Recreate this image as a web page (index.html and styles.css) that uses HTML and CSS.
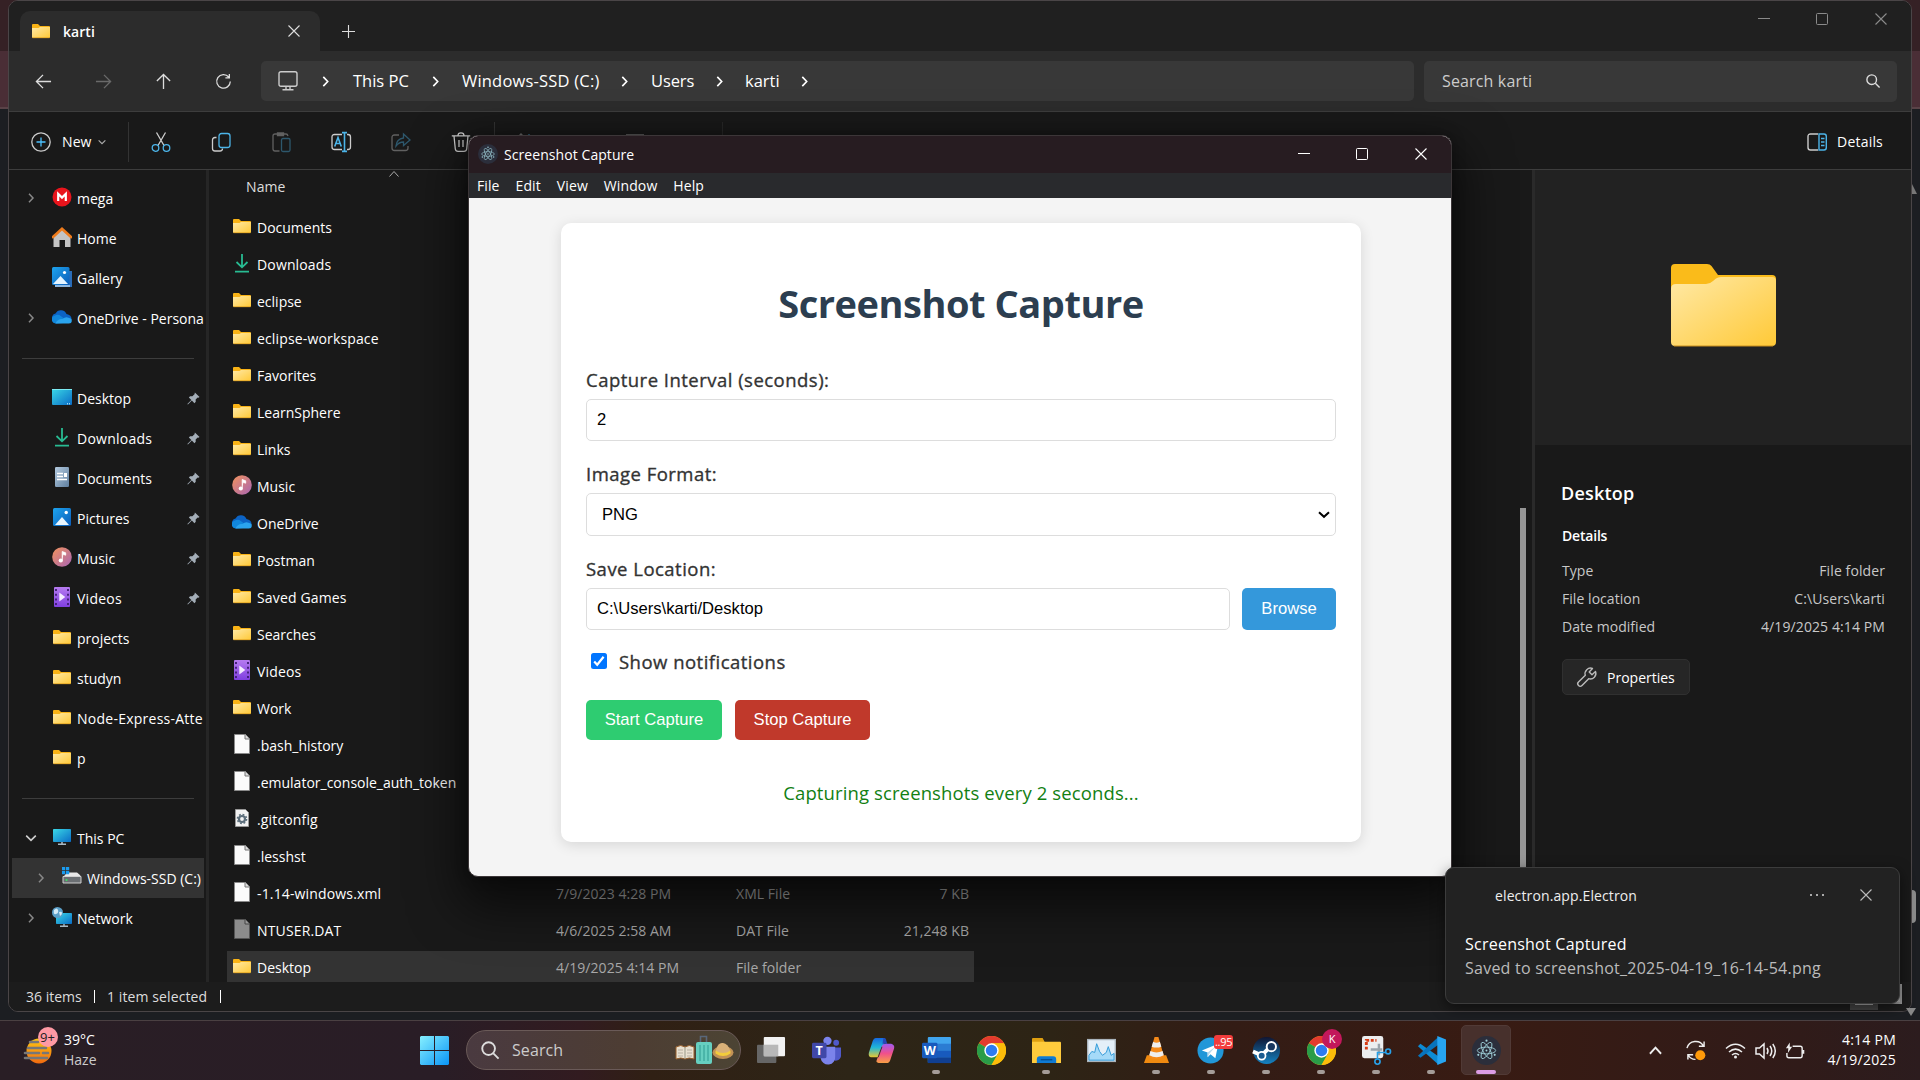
FILE: index.html
```html
<!DOCTYPE html>
<html lang="en">
<head>
<meta charset="utf-8">
<title>Desktop</title>
<link rel="stylesheet" href="styles.css">
</head>
<body>
<svg class="defs" width="0" height="0">
  <defs>
    <linearGradient id="gFolder" x1="0" y1="0" x2="1" y2="1"><stop offset="0" stop-color="#ffe9a6"/><stop offset="1" stop-color="#ffc937"/></linearGradient>
    <linearGradient id="gBlue" x1="0" y1="0" x2="1" y2="1"><stop offset="0" stop-color="#1da4ee"/><stop offset="1" stop-color="#0b5cb8"/></linearGradient>
    <linearGradient id="gCyan" x1="0" y1="0" x2="1" y2="1"><stop offset="0" stop-color="#3ad8e6"/><stop offset="1" stop-color="#0a6cc6"/></linearGradient>
    <linearGradient id="gMusic" x1="0" y1="0" x2="1" y2="1"><stop offset="0" stop-color="#f2935c"/><stop offset="1" stop-color="#a865b4"/></linearGradient>
    <linearGradient id="gDoc" x1="0" y1="0" x2="1" y2="1"><stop offset="0" stop-color="#b4cbe0"/><stop offset="1" stop-color="#5f7f9f"/></linearGradient>
    <linearGradient id="gVideo" x1="0" y1="0" x2="0" y2="1"><stop offset="0" stop-color="#b67bf0"/><stop offset="1" stop-color="#7f3fe0"/></linearGradient>
    <linearGradient id="gWin" x1="0" y1="0" x2="1" y2="1"><stop offset="0" stop-color="#86f0ff"/><stop offset="1" stop-color="#0a94f6"/></linearGradient>
    <linearGradient id="gCopA" x1="0" y1="0" x2="0" y2="1"><stop offset="0" stop-color="#1668e0"/><stop offset=".5" stop-color="#21b8d8"/><stop offset="1" stop-color="#e8c832"/></linearGradient>
    <linearGradient id="gCopB" x1="0" y1="0" x2="0" y2="1"><stop offset="0" stop-color="#a05af0"/><stop offset=".5" stop-color="#f0508c"/><stop offset="1" stop-color="#f8a044"/></linearGradient>
    <linearGradient id="gSteam" x1="0" y1="0" x2="0" y2="1"><stop offset="0" stop-color="#101532"/><stop offset="1" stop-color="#1583c2"/></linearGradient>
    <linearGradient id="gHaze" x1="0" y1="0" x2="0" y2="1"><stop offset="0" stop-color="#ffc812"/><stop offset="1" stop-color="#f06a10"/></linearGradient>
  </defs>
  <symbol id="folder" viewBox="0 0 20 20"><path d="M1 4q0-1 1-1h5l2 2h9q1 0 1 1v4H1z" fill="#f9b316"/><path d="M1 7h6.5L9 6h10v10q0 1-1 1H2q-1 0-1-1z" fill="url(#gFolder)"/><path d="M1.5 16.7h17" stroke="#e0a020" stroke-width=".8"/></symbol>
  <symbol id="down" viewBox="0 0 20 20"><path d="M10 1v13M4.5 9 10 14.3 15.500 9M3 18.700h14" fill="none" stroke="#28bb92" stroke-width="1.800"/></symbol>
  <symbol id="home" viewBox="0 0 20 20"><path d="M1.500 9.500 10 2l8.500 7.500V20H13v-7H7.500v7h-6z" fill="#c4c4c4"/><path d="M1 10 10 1.800 19 10" fill="none" stroke="#ee7b1c" stroke-width="2.600" stroke-linecap="round"/></symbol>
  <symbol id="mega" viewBox="0 0 20 20"><circle cx="10" cy="10" r="9.500" fill="#e9141c"/><path d="M6.200 14V6.800L10 10.600l3.800-3.800V14" fill="none" stroke="#fff" stroke-width="2.200"/></symbol>
  <symbol id="gallery" viewBox="0 0 20 20"><path d="M4 4h16v16H4z" fill="#2a6cb8"/><path d="M3 18h15v2H3z" fill="#8fb8e0"/><rect width="17.500" height="18" rx="1.500" fill="url(#gBlue)"/><path d="m1 17 7.500-8 7.500 8z" fill="#e4f4ff"/><circle cx="12.500" cy="5.500" r="1.600" fill="#fff"/></symbol>
  <symbol id="pics" viewBox="0 0 20 20"><rect x="1" y="1" width="18" height="18" rx="1.500" fill="url(#gBlue)"/><path d="m3 18 7-8 7 8z" fill="#e9f6ff"/><circle cx="14.200" cy="5.500" r="1.700" fill="#fff"/></symbol>
  <symbol id="cloud" viewBox="0 0 20 20"><path d="M1 13a4 4 0 0 1 2.500-6.500A6 6 0 0 1 14.500 7Q20 8 19.500 13z" fill="#0c63c4"/><path d="M4 16.500a4 4 0 0 1-1.500-7.800Q6 6.500 9 9.200l9 6.300z" fill="#1187dc"/><path d="M3.500 16.500q2-5 7-4.500 3-2.500 6-1.200 3.500.6 3.300 3.200-.2 2.500-3 2.500z" fill="#2aa4ee"/></symbol>
  <symbol id="desk" viewBox="0 0 20 20"><rect y="2" width="20" height="16" rx="1" fill="url(#gCyan)"/><path d="M0 2.500h20" stroke="#7cebf3"/><path d="M15 16.800h1m1 0h1" stroke="#dff" stroke-width="1"/></symbol>
  <symbol id="docs" viewBox="0 0 20 20"><rect x="3" width="14" height="20" rx="1.200" fill="url(#gDoc)"/><path d="M5 6.500h6M5 9.500h6M5 12.500h10" stroke="#fff" stroke-width="1.300"/><path d="M12 6h3v4h-3z" fill="#fff"/></symbol>
  <symbol id="music" viewBox="0 0 20 20"><circle cx="10" cy="10" r="9.800" fill="url(#gMusic)"/><circle cx="8.800" cy="13.500" r="2.100" fill="#fff"/><path d="M10.200 13.500V4.500l3.500 1.300v2.400l-2.300-.8" fill="#fff" stroke="#fff" stroke-width=".8"/></symbol>
  <symbol id="video" viewBox="0 0 20 20"><rect x="2" width="16" height="20" rx="1" fill="url(#gVideo)"/><path d="M4 2v17M16 2v17" stroke="#3c1c70" stroke-width="1.800" stroke-dasharray="2 2.700"/><path d="m7.300 5.500 6 4.500-6 4.500z" fill="#f4ecff"/></symbol>
  <symbol id="file" viewBox="0 0 20 20"><path d="M2.500.5h11l4 4.500v14.500h-15z" fill="#fbfbfb" stroke="#8a8a8a"/><path d="M13 .5V5h4.500" fill="#ddd" stroke="#777"/></symbol>
  <symbol id="filedim" viewBox="0 0 20 20"><path d="M2.500.5h11l4 4.500v14.500h-15z" fill="#8c8c8c" stroke="#555"/><path d="M13 .5V5h4.500" fill="#999" stroke="#444"/></symbol>
  <symbol id="filecfg" viewBox="0 0 20 20"><path d="M3.500 1.500h10l3 3V18.500h-13z" fill="#f2f2f2" stroke="#999"/><circle cx="10" cy="11" r="3" fill="none" stroke="#5c6e7b" stroke-width="2.200"/><circle cx="10" cy="11" r="4.600" fill="none" stroke="#5c6e7b" stroke-width="1.500" stroke-dasharray="1.800 1.810"/></symbol>
  <symbol id="pc" viewBox="0 0 20 20"><rect x="1" y="2" width="18" height="13" rx=".8" fill="url(#gCyan)"/><path d="M10 15v2M6 17.300h8" stroke="#a8b8c4" stroke-width="1.600"/></symbol>
  <symbol id="drive" viewBox="0 0 20 20"><path d="m3 8 2-2.500h10L18 8l1 2H1z" fill="#e8e8e8"/><path d="M1 9.500h18V16H1z" fill="#6b6f73" stroke="#d0d0d0"/><circle cx="4.500" cy="13" r="1" fill="#38e860"/><path d="M0 0h3.200v3.200H0zm4 0h3.200v3.200H4zM0 4h3.200v3.200H0zm4 0h3.200v3.200H4z" fill="#1b9cf0"/></symbol>
  <symbol id="net" viewBox="0 0 20 20"><rect x="4" y="6" width="16" height="11" rx=".8" fill="url(#gCyan)"/><path d="M12 17v2M8 19.300h8" stroke="#a8b8c4" stroke-width="1.400"/><circle cx="5.500" cy="5.500" r="5.500" fill="#5b9fc8"/><path d="M2 3q3-3 4 0T4 7 2 3m5 2q3-1 3 1T8 9z" fill="#d4ebf6"/></symbol>
  <symbol id="pin" viewBox="0 0 14 14"><path d="m8.500.500 5 5-1.300.7-.7-.2L9.300 8.200l.1 2.400L8 12 5.200 9.200 1 13.400l-.6-.6L4.700 8.600 2 5.900l1.300-1.300 2.500.1L8.100 2.500z" fill="#a3adb7"/></symbol>
  <symbol id="chev" viewBox="0 0 10 10"><path d="m3 .8 4 4.200-4 4.200" fill="none" stroke="currentColor" stroke-width="1.500"/></symbol>
  <symbol id="chevd" viewBox="0 0 10 10"><path d="m.8 3 4.200 4 4.200-4" fill="none" stroke="currentColor" stroke-width="1.500"/></symbol>
  <symbol id="x" viewBox="0 0 12 12"><path d="m.5.500 11 11m0-11-11 11" stroke="currentColor" stroke-width="1.100"/></symbol>
  <symbol id="min" viewBox="0 0 12 12"><path d="M0 5.500h12" stroke="currentColor"/></symbol>
  <symbol id="max" viewBox="0 0 12 12"><rect x=".5" y=".5" width="11" height="11" rx="1" fill="none" stroke="currentColor"/></symbol>
  <symbol id="electron" viewBox="0 0 30 30"><circle cx="15" cy="15" r="15" fill="#2b2e3b"/><g fill="none" stroke="#9fcfd8" stroke-width=".9"><ellipse cx="15" cy="15" rx="9.500" ry="3.500"/><ellipse cx="15" cy="15" rx="9.500" ry="3.500" transform="rotate(60 15 15)"/><ellipse cx="15" cy="15" rx="9.500" ry="3.500" transform="rotate(120 15 15)"/></g><g fill="#9fcfd8"><circle cx="15" cy="15" r="1"/><circle cx="15" cy="4.800" r="1.100"/><circle cx="6.500" cy="19.500" r="1.100"/><circle cx="23.500" cy="19.500" r="1.100"/></g></symbol>
  <symbol id="chrome" viewBox="0 0 30 30"><circle cx="15" cy="15" r="15" fill="#fbbc0a"/><path d="M15 15 2 7.500A15 15 0 0 1 28 7.500H15z" fill="#e33b2e"/><path d="M2 7.500A15 15 0 0 0 15 30l6.500-11.200L15 15z" fill="#2a9c48"/><path d="M15 7.500h13A15 15 0 0 1 15 30l6.500-11.200z" fill="#fbbc0a"/><circle cx="15" cy="15" r="7.400" fill="#fff"/><circle cx="15" cy="15" r="5.900" fill="#2d7bf0"/></symbol>
</svg>

<div class="desktop">
  <div class="behind-arrow"></div><div class="behind-thumb"></div>

  <section class="explorer">
    <header class="titlebar">
      <div class="tab"><svg class="i20"><use href="#folder"/></svg><b>karti</b><svg class="i12"><use href="#x"/></svg></div>
      <svg class="plus" viewBox="0 0 14 14"><path d="M7 0v14M0 7h14" stroke="#ddd" stroke-width="1.200"/></svg>
      <div class="controls dim"><svg><use href="#min"/></svg><svg><use href="#max"/></svg><svg><use href="#x"/></svg></div>
    </header>
    <nav class="navbar">
      <div class="arrows">
        <svg viewBox="0 0 18 18"><path d="M17 9H2M8.500 2 1.500 9l7 7" /></svg>
        <svg class="off" viewBox="0 0 18 18"><path d="M1 9h15M9.500 2l7 7-7 7"/></svg>
        <svg viewBox="0 0 18 18"><path d="M9 17V2M2 8.500 9 1.500l7 7"/></svg>
        <svg viewBox="0 0 18 18"><path d="M14.500 4.200A7.200 7.200 0 1 0 16.200 9M15.200 1v4.200H11"/></svg>
      </div>
      <div class="address">
        <svg class="monitor" viewBox="0 0 20 20"><path d="M3 .8h14q2 0 2 2v10.400q0 2-2 2H3q-2 0-2-2V2.800q0-2 2-2zM8 15v3.500m4-3.500v3.500M4.500 18.800h11" fill="none" stroke="#ccc" stroke-width="1.400"/></svg>
        <svg class="c c1"><use href="#chev"/></svg><span class="w1">This PC</span>
        <svg class="c"><use href="#chev"/></svg><span class="w2">Windows-SSD (C:)</span>
        <svg class="c"><use href="#chev"/></svg><span class="w3">Users</span>
        <svg class="c"><use href="#chev"/></svg><span class="w4">karti</span>
        <svg class="c"><use href="#chev"/></svg>
      </div>
      <div class="search"><span>Search karti</span><svg viewBox="0 0 14 14"><circle cx="5.700" cy="5.700" r="4.800"/><path d="m9.300 9.300 4.300 4.300"/></svg></div>
    </nav>
    <div class="toolbar">
      <div class="new"><svg class="i20" viewBox="0 0 20 20"><circle cx="10" cy="10" r="9.200" fill="none" stroke="#ccc" stroke-width="1.300"/><path d="M10 5.500v9M5.500 10h9" stroke="#4cc2ff" stroke-width="1.300"/></svg><span>New</span><svg class="tiny"><use href="#chevd"/></svg></div>
      <div class="tools">
        <svg viewBox="0 0 20 20"><path d="m5.500.500 7.500 13M14.500.500l-7.500 13" stroke="#ccc"/><circle cx="4.500" cy="16" r="3.300" stroke="#4cb4e8"/><circle cx="15.500" cy="16" r="3.300" stroke="#4cb4e8"/></svg>
        <svg viewBox="0 0 20 20"><path d="M5.500 5.500H4Q1.500 5.500 1.500 8v8.500q0 2.500 2.500 2.500h5q2.500 0 2.500-2.500" stroke="#ccc"/><rect x="8" y="1.500" width="11" height="14" rx="2.500" stroke="#4cb4e8"/></svg>
        <svg class="off" viewBox="0 0 20 20"><path d="M8.500 19H4q-2 0-2-2V4q0-2 2-2h11q1.500 0 2 2M6.500 1h6v2.500h-6z" stroke="#ccc"/><rect x="10.500" y="6.500" width="8.500" height="13" rx="1.500" stroke="#4cb4e8"/></svg>
        <svg viewBox="0 0 20 20"><path d="M11 2.500H3.500Q1 2.500 1 5v10q0 2.500 2.500 2.500H11M16 2.500h1Q19.500 2.500 19.500 5v10q0 2.500-2.500 2.500h-1" stroke="#ccc"/><path d="M13.500.6v19M11 .6h5M11 19.400h5M3.700 14.500 7 5.500l3.300 9M5 11.500h4" stroke="#4cb4e8" stroke-width="1.600"/></svg>
        <svg class="off" viewBox="0 0 20 20"><path d="M8 3H3.500Q1 3 1 5.500V16q0 2.500 2.500 2.500h11Q17 18.500 17 16v-2" stroke="#ccc"/><path d="M12.500 2 19 8l-6.500 5.500V10Q8 10 5 14q.5-7 7.500-8z" stroke="#4cb4e8"/></svg>
        <svg viewBox="0 0 20 20"><path d="M.8 3.800h18.400M7 3.500Q7 .8 10 .8t3 2.700M3 4l1.300 13Q4.600 19.300 7 19.300h6q2.400 0 2.700-2.300L17 4M8 8v7m4-7v7" stroke="#ccc"/></svg>
      </div>
      <div class="tools hidden-tools">
        <svg viewBox="0 0 20 20"><path d="M6 2v17M2 6l4-4 4 4" stroke="#aaa"/><path d="M14 2v17m4-4-4 4-4-4" stroke="#4cb4e8"/></svg>
        <svg viewBox="0 0 20 20"><path d="M1 3h18M1 9h18M1 15h18" stroke="#aaa"/></svg>
      </div>
      <div class="details-btn"><svg class="i20" viewBox="0 0 20 20"><path d="M11 2H3.500Q1 2 1 4.500v11Q1 18 3.500 18H11" fill="none" stroke="#ccc" stroke-width="1.400"/><path d="M12 2h5q2.300 0 2.300 2.500v11Q19.300 18 17 18h-5zM14 6.500h3.500M14 10h3.500M14 13.500h3.500" fill="none" stroke="#4cb4e8" stroke-width="1.400"/></svg><span>Details</span></div>
    </div>

    <div class="main">
      <aside class="sidebar">
        <div class="nav-row"><svg class="ex"><use href="#chev"/></svg><svg class="i20"><use href="#mega"/></svg><span>mega</span></div>
        <div class="nav-row"><i class="ex"></i><svg class="i20"><use href="#home"/></svg><span>Home</span></div>
        <div class="nav-row"><i class="ex"></i><svg class="i20"><use href="#gallery"/></svg><span>Gallery</span></div>
        <div class="nav-row"><svg class="ex"><use href="#chev"/></svg><svg class="i20"><use href="#cloud"/></svg><span>OneDrive - Persona</span></div>
        <div class="nav-sep"></div>
        <div class="nav-row"><i class="ex"></i><svg class="i20"><use href="#desk"/></svg><span>Desktop</span><svg class="pin"><use href="#pin"/></svg></div>
        <div class="nav-row"><i class="ex"></i><svg class="i20"><use href="#down"/></svg><span class="loose">Downloads</span><svg class="pin"><use href="#pin"/></svg></div>
        <div class="nav-row"><i class="ex"></i><svg class="i20"><use href="#docs"/></svg><span>Documents</span><svg class="pin"><use href="#pin"/></svg></div>
        <div class="nav-row"><i class="ex"></i><svg class="i20"><use href="#pics"/></svg><span>Pictures</span><svg class="pin"><use href="#pin"/></svg></div>
        <div class="nav-row"><i class="ex"></i><svg class="i20"><use href="#music"/></svg><span>Music</span><svg class="pin"><use href="#pin"/></svg></div>
        <div class="nav-row"><i class="ex"></i><svg class="i20"><use href="#video"/></svg><span class="loose">Videos</span><svg class="pin"><use href="#pin"/></svg></div>
        <div class="nav-row"><i class="ex"></i><svg class="i20"><use href="#folder"/></svg><span>projects</span></div>
        <div class="nav-row"><i class="ex"></i><svg class="i20"><use href="#folder"/></svg><span>studyn</span></div>
        <div class="nav-row"><i class="ex"></i><svg class="i20"><use href="#folder"/></svg><span class="loose">Node-Express-Atte</span></div>
        <div class="nav-row"><i class="ex"></i><svg class="i20"><use href="#folder"/></svg><span>p</span></div>
        <div class="nav-sep"></div>
        <div class="nav-row"><svg class="ex open"><use href="#chevd"/></svg><svg class="i20"><use href="#pc"/></svg><span>This PC</span></div>
        <div class="nav-row child"><svg class="ex"><use href="#chev"/></svg><svg class="i20"><use href="#drive"/></svg><span>Windows-SSD (C:)</span></div>
        <div class="nav-row"><svg class="ex"><use href="#chev"/></svg><svg class="i20"><use href="#net"/></svg><span>Network</span></div>
      </aside>

      <div class="files">
        <div class="files-head"><span>Name</span><svg viewBox="0 0 10 6"><path d="m.5 5.500 4.500-5 4.500 5" fill="none" stroke="#aaa"/></svg></div>
        <div class="row"><svg class="i20"><use href="#folder"/></svg><span>Documents</span></div>
        <div class="row"><svg class="i20"><use href="#down"/></svg><span class="loose">Downloads</span></div>
        <div class="row"><svg class="i20"><use href="#folder"/></svg><span>eclipse</span></div>
        <div class="row"><svg class="i20"><use href="#folder"/></svg><span class="loose">eclipse-workspace</span></div>
        <div class="row"><svg class="i20"><use href="#folder"/></svg><span>Favorites</span></div>
        <div class="row"><svg class="i20"><use href="#folder"/></svg><span>LearnSphere</span></div>
        <div class="row"><svg class="i20"><use href="#folder"/></svg><span>Links</span></div>
        <div class="row"><svg class="i20"><use href="#music"/></svg><span>Music</span></div>
        <div class="row"><svg class="i20"><use href="#cloud"/></svg><span>OneDrive</span></div>
        <div class="row"><svg class="i20"><use href="#folder"/></svg><span>Postman</span></div>
        <div class="row"><svg class="i20"><use href="#folder"/></svg><span class="loose">Saved Games</span></div>
        <div class="row"><svg class="i20"><use href="#folder"/></svg><span>Searches</span></div>
        <div class="row"><svg class="i20"><use href="#video"/></svg><span class="loose">Videos</span></div>
        <div class="row"><svg class="i20"><use href="#folder"/></svg><span>Work</span></div>
        <div class="row"><svg class="i20"><use href="#file"/></svg><span>.bash_history</span></div>
        <div class="row"><svg class="i20"><use href="#file"/></svg><span>.emulator_console_auth_token</span></div>
        <div class="row"><svg class="i20"><use href="#filecfg"/></svg><span class="loose">.gitconfig</span></div>
        <div class="row"><svg class="i20"><use href="#file"/></svg><span>.lesshst</span></div>
        <div class="row"><svg class="i20"><use href="#file"/></svg><span class="loose">-1.14-windows.xml</span><em>7/9/2023 4:28 PM</em><em>XML File</em><em>7 KB</em></div>
        <div class="row"><svg class="i20"><use href="#filedim"/></svg><span class="loose">NTUSER.DAT</span><em>4/6/2025 2:58 AM</em><em>DAT File</em><em>21,248 KB</em></div>
        <div class="row selected"><svg class="i20"><use href="#folder"/></svg><span>Desktop</span><em>4/19/2025 4:14 PM</em><em>File folder</em><em></em></div>
      </div>
      <div class="scroll"><div class="thumb"></div></div>

      <aside class="details">
        <div class="preview">
          <svg viewBox="0 0 107 84"><path d="M1 5q0-4 4-4h32q3 0 4.500 2l6.500 9h54q4 0 4 4v20H1z" fill="#fabb1a"/><path d="M1 26q0-5 5-5h30q4 0 7-3l3-2.500q2-1.500 5-1.500h51q4 0 4 4v61q0 4-4 4H5q-4 0-4-4z" fill="url(#gFolder)"/><path d="M4 83h99" stroke="#c88e1c"/></svg>
        </div>
        <div class="info">
          <h2>Desktop</h2>
          <h3>Details</h3>
          <dl><dt>Type</dt><dd>File folder</dd><dt>File location</dt><dd>C:\Users\karti</dd><dt>Date modified</dt><dd>4/19/2025 4:14 PM</dd></dl>
          <div class="props"><svg viewBox="0 0 20 20"><path d="M18.500 4.500 15 7.800 12.200 5l3.300-3.500A5.500 5.500 0 0 0 8.300 8.300L1.500 15a2.400 2.400 0 0 0 3.500 3.500l6.700-6.800a5.500 5.500 0 0 0 6.800-7.200z" fill="none" stroke="#bbb" stroke-width="1.400" stroke-linejoin="round"/></svg><span>Properties</span></div>
        </div>
      </aside>
    </div>
    <footer class="status"><span class="s1">36 items</span><i></i><span class="s2">1 item selected</span><i></i><div class="views"><b></b><b></b></div></footer>
  </section>
  <div class="behind-tip"></div>

  <section class="app">
    <header class="app-title"><svg class="i20"><use href="#electron"/></svg><span>Screenshot Capture</span><div class="controls"><svg><use href="#min"/></svg><svg><use href="#max"/></svg><svg><use href="#x"/></svg></div></header>
    <div class="menu"><span>File</span><span>Edit</span><span>View</span><span>Window</span><span>Help</span></div>
    <div class="page">
      <div class="card">
        <h1>Screenshot Capture</h1>
        <label class="l1">Capture Interval (seconds):</label>
        <div class="field">2</div>
        <label class="l2">Image Format:</label>
        <div class="field select"><span>PNG</span><svg viewBox="0 0 12 8"><path d="m1 1.200 5 4.600 5-4.600" fill="none" stroke="#000" stroke-width="2"/></svg></div>
        <label class="l3">Save Location:</label>
        <div class="pair"><div class="field">C:\Users\karti/Desktop</div><div class="btn blue">Browse</div></div>
        <div class="check"><svg viewBox="0 0 16 16"><rect width="16" height="16" rx="2.500" fill="#0075ff"/><path d="m3.200 8.500 3 3.200 6.400-8" fill="none" stroke="#fff" stroke-width="2.200"/></svg><span>Show notifications</span></div>
        <div class="buttons"><div class="btn green">Start Capture</div><div class="btn red">Stop Capture</div></div>
        <p>Capturing screenshots every 2 seconds...</p>
      </div>
    </div>
  </section>

  <section class="toast">
    <header><span>electron.app.Electron</span><svg class="dots" viewBox="0 0 16 4"><path d="M1 2h2m4 0h2m4 0h2" stroke="#aaa" stroke-width="1.800"/></svg><svg class="i12"><use href="#x"/></svg></header>
    <div class="t1">Screenshot Captured</div>
    <div class="t2">Saved to screenshot_2025-04-19_16-14-54.png</div>
  </section>

  <footer class="taskbar">
    <div class="weather">
      <svg viewBox="0 0 36 40"><ellipse cx="15" cy="26" rx="12.500" ry="12.500" fill="url(#gHaze)"/><path d="M6 17h8M4 23h18M1 28h14M19 28h5M1 33h22" stroke="#777" stroke-width="2.600" stroke-linecap="round"/><circle cx="24" cy="12" r="10" fill="#ff99a4"/></svg>
      <span class="nine">9+</span>
      <div><span>39°C</span><span class="soft">Haze</span></div>
    </div>
    <svg class="start" viewBox="0 0 29 29"><path d="M1 0h13v14H0V1zM15 0h13l1 1v13H15zM0 15h14v14H1l-1-1zM15 15h14v13l-1 1H15z" fill="url(#gWin)"/></svg>
    <div class="pill"><svg class="mag" viewBox="0 0 20 20"><circle cx="8" cy="8" r="6.700"/><path d="m13 13 5.500 5.500"/></svg><span>Search</span>
      <svg class="travel" viewBox="0 0 58 30"><path d="M0 12q5-3 9 0 4-3 9 0v12q-5-2-9 0-4-2-9 0z" fill="#e8e0d0" stroke="#98602c"/><path d="M9 12v12" stroke="#998"/><path d="M2 15h5m-5 3h5m-5 3h5m4-6h5m-5 3h5m-5 3h5" stroke="#aaa294" stroke-width=".8"/><path d="M24.500 8V1.500h6V8" fill="none" stroke="#59677a" stroke-width="1.600"/><rect x="20" y="7" width="16" height="22" rx="2" fill="#66cfc0"/><path d="M24 10v16m4-16v16m4-16v16" stroke="#2e9c92"/><ellipse cx="47" cy="17.500" rx="10.500" ry="6.500" fill="#c29256"/><path d="M40 15q2-8 7-7t7 7v3q-7 4-14 0z" fill="#d8b078"/><path d="M39.500 15.500q7.500 5 15 0v3q-7.500 5-15 0z" fill="#f3cc3c"/></svg>
    </div>
    <div class="apps">
      <div><svg viewBox="0 0 30 30"><rect y="9" width="20" height="19" rx="1" fill="#666"/><rect x="7" y="1" width="22" height="20" rx="1" fill="#f2f2f2"/><path d="M7 9h15v12H7z" fill="#b8b8b8"/></svg></div>
      <div><svg viewBox="0 0 30 30"><circle cx="16" cy="5" r="4.300" fill="#7b83eb"/><circle cx="25" cy="7" r="3" fill="#5059c9"/><path d="M20 12h10v9a5.500 5.500 0 0 1-10 2z" fill="#5059c9"/><path d="M9 11h15v10a7.500 7.500 0 0 1-15 2z" fill="#7b83eb"/><rect y="7" width="15" height="16" rx="1.500" fill="#4048a8"/><text x="7.500" y="19.500">T</text></svg></div>
      <div><svg viewBox="0 0 30 30"><path d="M9 2h8q3 0 2 3l-5 14q-1 3-4 3H4q-3-1-2-5L6 5q1-3 3-3z" fill="url(#gCopA)"/><path d="M17 2q3 0 3 3l1 3h-5z" fill="#2448b8"/><path d="M20 8h5q4 1 3 5l-4 12q-1 3-4 3h-8q-3-1-2-3l5-14q1-3 5-3z" fill="url(#gCopB)"/><path d="m16 11-4 11h-1l4-11z" fill="#332"/></svg></div>
      <div class="run"><svg viewBox="0 0 30 30"><rect x="6" y="1" width="24" height="27" rx="1" fill="#41a5ee"/><path d="M6 8h24v7H6z" fill="#2b7cd3"/><path d="M6 15h24v7H6z" fill="#185abd"/><path d="M6 22h24v6H6z" fill="#103f91"/><rect y="7" width="16" height="16" rx="1.500" fill="#185abd"/><text x="8" y="20">W</text></svg></div>
      <div><svg viewBox="0 0 30 30"><use href="#chrome"/></svg></div>
      <div class="run"><svg viewBox="0 0 30 30"><path d="M0 3q0-1 1-1h10l2 4v6H0z" fill="#e0a010"/><path d="M0 6h29q1 0 1 1v21H0z" fill="#ffcb3c"/><path d="M5 28v-4q0-3 3-3h14q3 0 3 3v4z" fill="#0f7bd4"/><path d="M9 24.500h12" stroke="#064f94" stroke-width="1.500"/></svg></div>
      <div><svg viewBox="0 0 30 30"><rect x=".7" y="3.700" width="28.600" height="22.600" fill="#e4eff8" stroke="#aab4bc" stroke-width="1.400"/><path d="M2 20 5 16l3 1 2-9 3 8 3 4 4-3 2-6 3 9 3-2v7H2z" fill="#a5daf8" stroke="#3199d8"/></svg></div>
      <div class="run"><svg viewBox="0 0 30 30"><path d="M5 20h20l3 8H2z" fill="#f08a10"/><path d="M13 1h4l6 21q-8 4-16 0z" fill="#f58a1a"/><path d="m11.500 6-1.500 5q5 2 10 0l-1.500-5q-3.500 2-7 0zM8.700 15.500 7.500 20q7.500 4 15 0l-1.200-4.500q-6.300 3-12.600 0z" fill="#eee"/></svg></div>
      <div class="run tg"><svg viewBox="0 0 30 30"><circle cx="14" cy="15" r="13.500" fill="#2197d8"/><path d="m5 15 17-7-3 15-5-4-3 3v-5z" fill="#fff"/><path d="m11 17 8-6-6 7-2 4z" fill="#b8d8ec"/></svg><span>..95</span></div>
      <div class="run"><svg viewBox="0 0 30 30"><circle cx="15" cy="15" r="14" fill="url(#gSteam)"/><path d="m1 16 9 4 9-9" fill="none" stroke="#fff" stroke-width="4"/><circle cx="10" cy="20.500" r="4" fill="#1b5b90" stroke="#fff" stroke-width="1.800"/><circle cx="20" cy="11" r="4.800" fill="#183860" stroke="#fff" stroke-width="2"/></svg></div>
      <div class="run kk"><svg viewBox="0 0 30 30"><use href="#chrome"/></svg><span>K</span></div>
      <div class="run"><svg viewBox="0 0 30 30"><rect x="0" y="0" width="22" height="23" rx="2.500" fill="#eceef0"/><path d="M4.500 14V4.500H15" fill="none" stroke="#d83b14" stroke-width="3" stroke-dasharray="3 1.700"/><path d="M9 14h12M17.500 8v12" stroke="#9aa4ac" stroke-width="2.500"/><path d="M16 24V17h8" fill="none" stroke="#28a0e8" stroke-width="1.600"/><circle cx="16" cy="26.500" r="2.700" fill="none" stroke="#28a0e8" stroke-width="1.700"/><circle cx="27" cy="16" r="2.500" fill="none" stroke="#28a0e8" stroke-width="1.700"/></svg></div>
      <div class="run"><svg viewBox="0 0 30 30"><path d="M1 10.500 3.500 8 22 21v8.500z" fill="#0d8bd4"/><path d="M1 20.500 3.500 22.500 22 9V1z" fill="#0873bc"/><path d="m21 0 9 3.500v23L21 30z" fill="#27a5f2"/></svg></div>
      <div class="run active"><svg viewBox="0 0 30 30"><use href="#electron"/></svg></div>
    </div>
    <div class="tray">
      <svg class="up" viewBox="0 0 14 9"><path d="m1 8 6-6.500L13 8"/></svg>
      <svg class="sync" viewBox="0 0 21 21"><path d="M1 8A9.500 9.500 0 0 1 18.500 6M19 1v5h-5.500M2 20v-5h5.500M2.500 15.500Q5 20 10 19.800"/><circle cx="15" cy="15.500" r="5.300" class="o"/></svg>
      <svg class="wifi" viewBox="0 0 21 16"><path d="M1 5.500q9.500-8.500 19 0M4 9q6.500-5.800 13 0M7 12q3.500-3 7 0"/><circle cx="10.500" cy="14" r="1.500" class="w"/></svg>
      <svg class="vol" viewBox="0 0 21 18"><path d="M1 6h3.500L9 2v14l-4.500-4H1zM12 6q2 3 0 6M15 4q3.500 5 0 10M17.800 2q5 7 0 14"/></svg>
      <svg class="bat" viewBox="0 0 21 18"><path d="M8 4h8q2 0 2 2v8q0 2-2 2H4q-2 0-2-2v-3M19.500 8v4"/><path class="w" d="M5 0 1 6h2.500L3 11l4.500-6.500H5z"/></svg>
      <div class="clock"><span>4:14 PM</span><span>4/19/2025</span></div>
    </div>
  </footer>
</div>
</body>
</html>
```

FILE: styles.css
```css
* { box-sizing: border-box; }
body { margin: 0; font-family: "Open Sans", "Noto Sans", sans-serif; font-size: 14px; color: #fff; overflow: hidden; }
svg { display: block; flex: none; overflow: visible; }
h1, h2, h3, p, dl, dd { margin: 0; }
.defs { position: absolute; }
.i20 { width: 20px; height: 20px; }
.i12 { width: 12px; height: 12px; }
.desktop { position: relative; width: 1920px; height: 1080px; overflow: hidden; background: linear-gradient(#352125 0 51px, #4a2e36 51px 107px, #5a4348 107px 109px, #1c1e22 109px); }
.behind-arrow { position: absolute; left: 1907px; top: 184px; border: 5px solid transparent; border-bottom: 10px solid #777; border-top: 0; }
.behind-thumb { position: absolute; left: 1906px; top: 890px; width: 10px; height: 33px; border-radius: 4px; background: #8a8a8a; }
.behind-tip { position: absolute; left: 1906px; top: 1008px; border: 5px solid transparent; border-top: 8px solid #888; border-bottom: 0; }

.explorer { position: absolute; left: 8px; top: 0; width: 1904px; height: 1012px; border: 1px solid #4a4547; border-radius: 10px; overflow: hidden; background: #191919; display: flex; flex-direction: column; }
.titlebar { height: 50px; background: #202020; display: flex; flex: none; }
.tab { width: 300px; height: 40px; margin: 10px 0 0 11px; border-radius: 10px 10px 0 0; background: #2c2c2c; display: flex; align-items: center; padding: 0 20px 0 11px; }
.tab b { margin-left: 12px; flex: 1; font-size: 14px; font-weight: 600; letter-spacing: .05px; }
.tab .i12 { color: #ddd; }
.plus { width: 13px; height: 13px; margin: 24px 0 0 22px; }
.controls { margin-left: auto; display: flex; gap: 46.500px; color: #fff; }
.controls svg { width: 12px; height: 12px; }
.controls.dim { color: #8a8a8a; margin: 12px 24px 0 auto; }
.controls svg:nth-child(2) { margin: 0 .5px 0 -.5px; }
.navbar { height: 61px; background: #2c2c2c; border-bottom: 1px solid #3d3d3d; display: flex; flex: none; padding-top: 10px; font-size: 16px; }
.arrows { width: 252px; height: 40px; display: flex; align-items: center; gap: 43px; padding-left: 26px; flex: none; }
.arrows svg { width: 17px; height: 17px; fill: none; stroke: #ddd; stroke-width: 1.400; }
.arrows .off { opacity: .35; }
.address { width: 1153px; height: 40px; border-radius: 5px; background: #383838; display: flex; align-items: center; font-size: 16.500px; }
.monitor { width: 20px; height: 20px; margin-left: 17px; }
.c { width: 11px; height: 11px; flex: none; }
.c1 { margin-left: 22px; }
.address span { margin-left: 21px; white-space: nowrap; letter-spacing: -.1px; padding-bottom: 1px; flex: none; }
.address .w1 { width: 77px; letter-spacing: 0; margin-left: 22px; }
.address .w2 { width: 157px; letter-spacing: .2px; }
.w3 { width: 63px; }
.address .w4 { width: 54px; margin-left: 20px; letter-spacing: 0; }
.search { margin-left: 10px; width: 473px; height: 41px; border-radius: 5px; background: #383838; display: flex; align-items: center; justify-content: space-between; padding: 0 17px 2px 18px; color: #ccc; letter-spacing: .15px; }
.search svg { width: 14px; height: 14px; fill: none; stroke: #ddd; stroke-width: 1.400; }
.toolbar { height: 58px; border-bottom: 1px solid #3d3d3d; display: flex; flex: none; align-items: center; padding: 2px 0 0 22px; }
.new { display: flex; align-items: center; width: 98px; height: 40px; border-right: 1px solid #333; }
.new span { margin: 0 6px 0 11px; letter-spacing: .1px; }
.tiny { width: 8px; height: 8px; color: #aaa; }
.tools { display: flex; align-items: center; gap: 40px; padding-left: 22px; width: 366px; height: 40px; border-right: 1px solid #333; }
.tools svg { width: 20px; height: 20px; fill: none; stroke-width: 1.300; }
.tools .off { opacity: .4; }
.hidden-tools { width: 228px; gap: 90px; padding-left: 20px; opacity: .6; }
.details-btn { margin-left: auto; display: flex; gap: 10px; margin-right: 28px; letter-spacing: .2px; }

.main { flex: 1; min-height: 0; display: flex; overflow: hidden; }
.sidebar { width: 200px; border-right: 3px solid #262626; padding: 8px 2px 0 3px; display: flex; flex-direction: column; flex: none; overflow: hidden; }
.nav-row { height: 40px; flex: none; display: flex; align-items: center; padding-left: 14px; overflow: hidden; white-space: nowrap; }
.nav-row .i20 { margin: -2px 5px 0 16px; }
.ex { width: 10px; height: 10px; flex: none; color: #888; }
.open { color: #ccc; transform: scale(1.15); }
.nav-row .pin { width: 13px; height: 13px; margin-left: auto; margin-right: 4px; }
.nav-row span { letter-spacing: 0; }
.nav-row .loose { letter-spacing: .25px; }
.row .loose { letter-spacing: .15px; }
.child { background: #333; padding-left: 24px; }
.nav-sep { height: 40px; flex: none; display: flex; align-items: center; padding: 0 10px; }
.nav-sep::before { content: ""; height: 1px; flex: 1; background: #3d3d3d; }
.files { width: 765px; padding-left: 18px; overflow: hidden; flex: none; }
.files-head { height: 41px; display: flex; padding: 7px 0 0 19px; color: #ddd; letter-spacing: .1px; }
.files-head svg { width: 10px; height: 6px; margin: -6px 0 0 103px; }
.row { height: 33px; margin-bottom: 4px; padding-left: 5px; display: grid; grid-template-columns: 20px 304px 180px 130px 103px; align-items: center; white-space: nowrap; letter-spacing: 0; }
.row .i20 { margin-top: -3px; }
.row span { padding-left: 5px; }
.row em { font-style: normal; color: #a8a8a8; letter-spacing: .05px; }
.row em:last-child { text-align: right; }
.selected { background: #333; }
.scroll { flex: 1; padding: 338px 6px 0; display: flex; justify-content: flex-end; }
.thumb { width: 6px; background: #969696; }
.details { width: 379px; border-left: 3px solid #2a2a2a; flex: none; }
.preview { height: 275px; background: #222; display: flex; justify-content: center; padding: 93px 0 0; }
.preview svg { width: 107px; height: 84px; }
.info { padding: 34px 26px 0 26px; }
.info h2 { font-size: 18px; line-height: 28px; font-weight: 600; letter-spacing: .2px; }
.info h3 { font-size: 14px; line-height: 20px; font-weight: 600; margin: 19px 0 11px 1px; letter-spacing: -.2px; }
.info dl { display: grid; grid-template-columns: auto auto; line-height: 28px; padding-left: 1px; color: #c8c8c8; letter-spacing: .05px; }
.info dd { text-align: right; letter-spacing: .1px; }
.props { width: 128px; height: 36px; margin: 18px 0 0 1px; border: 1px solid #303030; border-radius: 5px; background: #262626; display: flex; align-items: center; padding-left: 14px; gap: 10px; letter-spacing: 0; }
.props svg { width: 20px; height: 20px; }
.status { height: 29px; flex: none; background: #1c1c1c; display: flex; align-items: center; padding-left: 17px; color: #ddd; }
.s1 { width: 68px; }
.status i { width: 1px; height: 13px; background: #fff; margin-right: 12px; }
.s2 { width: 113px; white-space: nowrap; letter-spacing: .1px; }
.views { margin-left: auto; display: flex; gap: 4px; padding-right: 9px; }
.views b { width: 28px; height: 26px; border: 5px solid #444; background: #aaa; }
.views b:last-child { width: 20px; border: 2px solid #999; height: 20px; }

.app { position: absolute; left: 468px; top: 135px; width: 984px; height: 742px; border: 1px solid #3c3638; border-radius: 10px; overflow: hidden; background: #f4f4f4; box-shadow: 0 22px 50px 8px rgba(0,0,0,.6), 0 0 14px rgba(0,0,0,.3); }
.app-title { height: 37px; background: #271c21; display: flex; align-items: center; padding: 0 24px 1px 9px; }
.app-title span { margin-left: 6px; letter-spacing: .07px; }
.menu { height: 25px; background: #292a2d; display: flex; align-items: center; gap: 16px; padding-left: 8px; letter-spacing: .1px; }
.page { padding: 25px 90px 0 92px; }
.card { width: 800px; height: 619px; border-radius: 10px; background: #fff; box-shadow: 0 3px 14px rgba(0,0,0,.12); padding: 50px 25px 0; display: flex; flex-direction: column; color: #333; font-size: 18.500px; }
.card h1 { font-size: 38px; line-height: 60px; font-weight: 700; text-align: center; color: #2c3e50; letter-spacing: -.45px; }
.card label, .check { -webkit-text-stroke: .35px #333; letter-spacing: .48px; }
.card label { line-height: 28px; }
.l1 { margin: 33px 0 5px; }
.l2 { margin: 19px 0 5px; }
.l3 { margin: 19px 0 5px; }
.field { height: 42px; border: 1px solid #ddd; border-radius: 5px; display: flex; align-items: center; padding: 0 10px 1px; color: #000; font: 16.600px "Liberation Sans", Arial, sans-serif; }
.select { height: 43px; justify-content: space-between; padding: 0 5px 0 15px; }
.select svg { width: 12px; height: 8px; }
.pair { display: flex; gap: 12px; }
.pair .field { flex: 1; }
.btn { height: 42px; border-radius: 5px; display: flex; align-items: center; justify-content: center; padding-bottom: 1px; color: #fff; font: 16.600px "Liberation Sans", Arial, sans-serif; }
.blue { width: 94px; background: #3498db; }
.check { display: flex; align-items: center; gap: 12px; height: 28px; margin: 18px 0 24px 5px; }
.check svg { width: 16px; height: 16px; margin-top: -3px; }
.check span { margin-top: -2px; }
.buttons { display: flex; gap: 13px; }
.green { width: 136px; height: 40px; background: #2ecc71; }
.red { width: 135px; height: 40px; background: #c0392b; }
.card p { text-align: center; color: #128012; line-height: 28px; margin-top: 39px; letter-spacing: .12px; }

.toast { position: absolute; left: 1445px; top: 867px; width: 455px; height: 137px; border: 1px solid #3c3c3c; border-radius: 9px; background: #222; box-shadow: 0 4px 14px rgba(0,0,0,.5); padding: 17px 27px 0 19px; }
.toast header { display: flex; align-items: center; height: 20px; padding-left: 30px; letter-spacing: .12px; color: #eee; }
.toast .dots { width: 16px; height: 4px; margin: 0 35px 0 auto; }
.toast .i12 { color: #bbb; }
.t1, .t2 { font-size: 16px; line-height: 24px; white-space: nowrap; letter-spacing: .24px; }
.t1 { margin-top: 27px; }
.t2 { color: #bbb; }

.taskbar { position: absolute; left: 0; top: 1020px; width: 1920px; height: 60px; border-top: 1px solid #4a4042; display: flex; background: linear-gradient(90deg, #291e25 0, #291d26 440px, #321b20 580px, #302014 650px, #2d2517 850px, #2d2415 1050px, #331c15 1230px, #381b13 1500px, #301b19 1800px, #2c1c1e); }
.weather { width: 420px; display: flex; flex: none; padding-left: 24px; position: relative; }
.weather svg { width: 36px; height: 40px; margin-top: 4px; }
.nine { position: absolute; left: 40px; top: 7px; font-size: 13px; line-height: 18px; color: #222; letter-spacing: 0; }
.weather div { margin: 9px 0 0 4px; display: flex; flex-direction: column; line-height: 20px; letter-spacing: 0; }
.soft { color: #ccc; }
.start { width: 29px; height: 29px; margin-top: 15px; }
.pill { width: 275px; height: 40px; margin: 9px 15px 0 17px; border: 1px solid #6a5a58; border-radius: 20px; background: linear-gradient(90deg, #4a3a40, #4d3d33 60%, #4c4434); display: flex; align-items: center; padding: 0 6px 0 14px; flex: none; color: #ccc; font-size: 16px; letter-spacing: .1px; }
.mag { width: 19px; height: 19px; fill: none; stroke: #ddd; stroke-width: 2; }
.pill span { margin-left: 12px; flex: 1; }
.travel { width: 58px; height: 30px; }
.apps { display: flex; gap: 5px; margin: 4px 0 0 -10px; }
.apps div { width: 50px; height: 50px; position: relative; display: flex; justify-content: center; padding-top: 11px; flex: none; border-radius: 5px; }
.apps svg { width: 29px; height: 29px; }
.apps text { fill: #fff; font: bold 13px "Open Sans", sans-serif; text-anchor: middle; }
.apps .run::after { content: ""; position: absolute; left: 21px; bottom: 1px; width: 8px; height: 4px; border-radius: 2px; background: #a49c98; }
.apps .active { background: #47302c; border: 1px solid #513a36; padding-top: 10px; }
.apps .active::after { left: 14px; bottom: 0; width: 20px; background: #dc9ce4; }
.tg span, .kk span { position: absolute; left: 28px; top: 10px; font-size: 11px; line-height: 14px; padding: 0 1px; border-radius: 3px; background: #f23c3c; letter-spacing: -.3px; }
.kk span { left: 26px; top: 4px; width: 20px; height: 20px; line-height: 20px; border-radius: 50%; text-align: center; background: #c2185b; }
.tray { flex: 1; display: flex; align-items: center; padding: 0 24px 0 0; justify-content: flex-end; }
.tray svg { fill: none; stroke: #eee; stroke-width: 1.500; }
.tray .o { fill: #ff9a0a; stroke: none; }
.tray .w { fill: #eee; stroke: none; }
.up { width: 13px; height: 9px; margin-right: 24px; }
.up path { stroke-width: 2; }
.sync { width: 20px; height: 21px; margin-right: 19px; }
.wifi { width: 21px; height: 16px; margin-right: 9px; }
.vol { width: 21px; height: 18px; margin-right: 9px; }
.bat { width: 20px; height: 18px; margin-right: 21px; }
.clock { display: flex; flex-direction: column; text-align: right; line-height: 20px; width: 70px; letter-spacing: .25px; white-space: nowrap; margin-top: -2px; }
```
